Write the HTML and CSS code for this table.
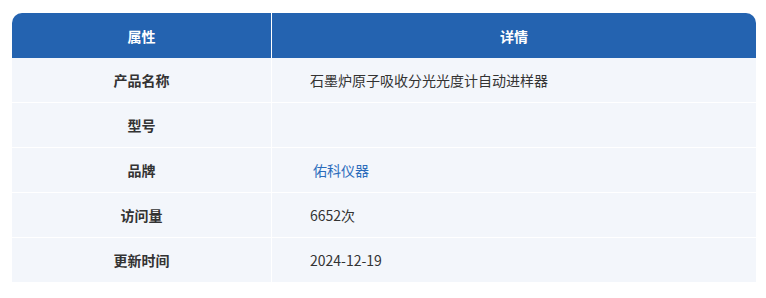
FILE: index.html
```html
<!DOCTYPE html>
<html lang="zh-CN">
<head>
<meta charset="utf-8">
<title>产品详情</title>
<link rel="stylesheet" href="styles.css">
</head>
<body>
<div class="wrap">
  <table class="spec">
    <thead>
      <tr><th class="c-attr">属性</th><th class="c-val">详情</th></tr>
    </thead>
    <tbody>
      <tr><td class="k">产品名称</td><td class="v">石墨炉原子吸收分光光度计自动进样器</td></tr>
      <tr><td class="k">型号</td><td class="v"></td></tr>
      <tr><td class="k">品牌</td><td class="v"><a class="brand" href="#">佑科仪器</a></td></tr>
      <tr><td class="k">访问量</td><td class="v">6652次</td></tr>
      <tr><td class="k">更新时间</td><td class="v">2024-12-19</td></tr>
    </tbody>
  </table>
</div>
</body>
</html>
```
FILE: styles.css
```css
html, body {
  margin: 0;
  padding: 0;
  background: #ffffff;
}
body {
  font-family: "Noto Sans CJK SC", "Noto Sans", sans-serif;
  font-size: 14px;
  color: #333333;
}
.wrap {
  padding: 13px 10px 0 12px;
}
.spec {
  width: 744px;
  border-collapse: separate;
  border-spacing: 0;
  table-layout: fixed;
}
.spec th {
  background: #2463b0;
  color: #ffffff;
  font-weight: bold;
  height: 45px;
  padding: 0;
  text-align: center;
  line-height: 20px;
}
.spec .c-attr {
  width: 259px;
  border-right: 1px solid #ffffff;
  border-top-left-radius: 10px;
}
.spec .c-val {
  border-top-right-radius: 10px;
}
.spec td {
  background: #f3f6fb;
  height: 44px;
  padding: 0;
  border-top: 1px solid #ffffff;
  line-height: 20px;
}
.spec tbody tr:first-child td {
  border-top: 0;
}
.spec td.k {
  text-align: center;
  font-weight: bold;
  border-right: 1px solid #ffffff;
}
.spec td.v {
  padding-left: 38px;
}
.brand {
  color: #2b6cbb;
  text-decoration: none;
  padding-left: 3px;
}
```
